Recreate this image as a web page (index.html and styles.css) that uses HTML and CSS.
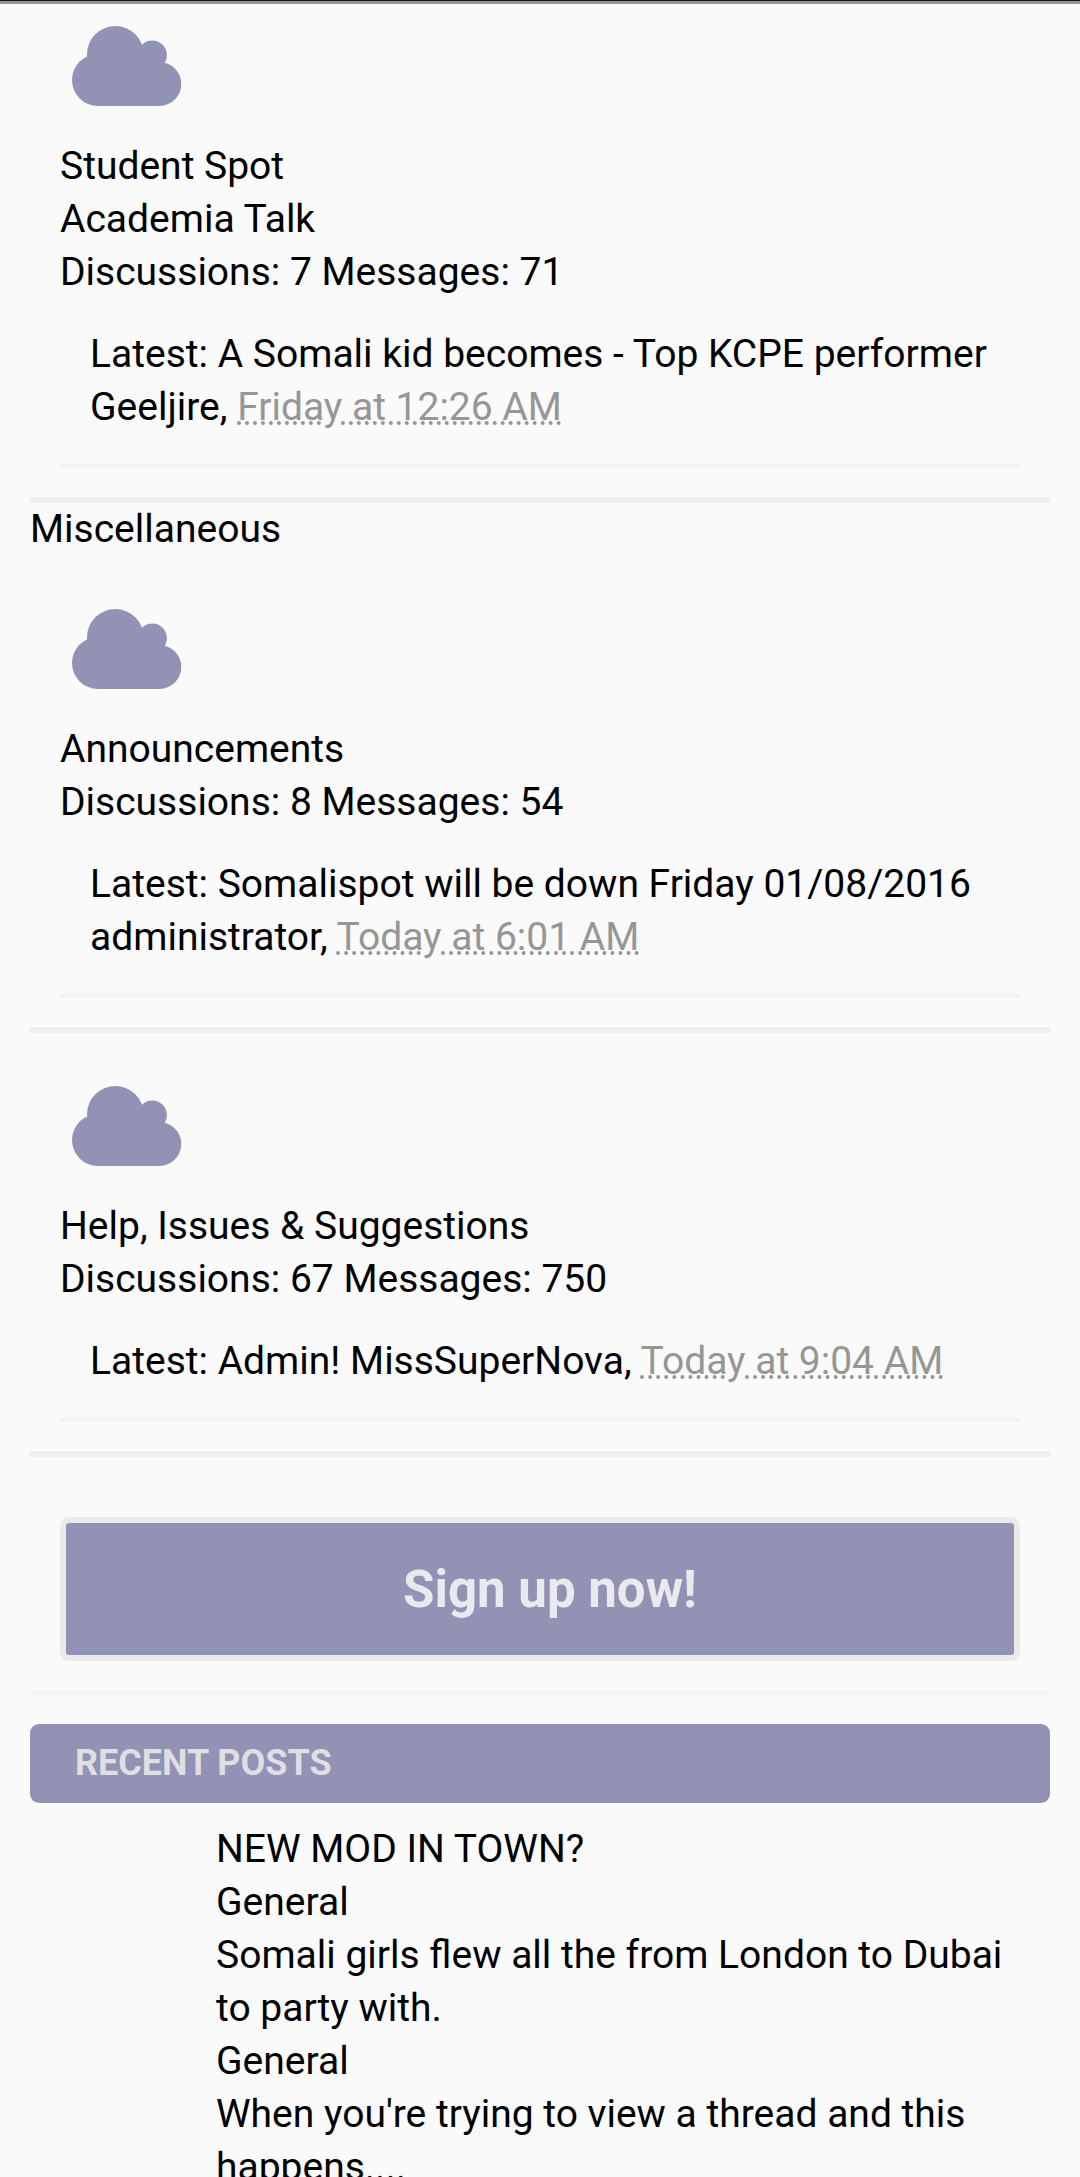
FILE: index.html
```html
<!DOCTYPE html>
<html lang="en">
  <head>
    <meta charset="UTF-8" />
    <meta name="viewport" content="width=device-width, initial-scale=1.0" />
    <title>Forum</title>
    <link rel="stylesheet" href="styles.css">
  </head>
  <body>
    <!-- Cloud shape shared by every forum node -->
    <svg class="sprite" aria-hidden="true">
      <symbol id="cloud" viewBox="0 0 110 80">
        <circle cx="43.3" cy="28.3" r="28.3" />
        <circle cx="80.3" cy="29" r="14.6" />
        <circle cx="26" cy="54" r="26" />
        <circle cx="87.3" cy="58" r="22" />
        <path d="M26 40L43 28H80L87 40V80H26Z" />
      </symbol>
    </svg>

    <header class="topbar"></header>

    <main class="content">
      <ol class="nodes">
        <li class="node node-first">
          <div class="node-info">
            <svg class="node-icon"><use href="#cloud" /></svg>
            <h3><a href="#">Student Spot</a></h3>
            <p>Academia Talk</p>
            <p>Discussions: 7 Messages: 71</p>
            <p class="latest">
              Latest: <a href="#">A Somali kid becomes - Top KCPE performer</a>
              <a href="#">Geeljire</a>, <abbr title="Friday at 12:26 AM">Friday at 12:26 AM</abbr>
            </p>
          </div>
        </li>
      </ol>

      <h2 class="category"><a href="#">Miscellaneous</a></h2>
      <ol class="nodes">
        <li class="node">
          <div class="node-info">
            <svg class="node-icon"><use href="#cloud" /></svg>
            <h3><a href="#">Announcements</a></h3>
            <p>Discussions: 8 Messages: 54</p>
            <p class="latest">
              Latest: <a href="#">Somalispot will be down Friday 01/08/2016</a>
              <a href="#">administrator</a>, <abbr title="Today at 6:01 AM">Today at 6:01 AM</abbr>
            </p>
          </div>
        </li>
        <li class="node">
          <div class="node-info">
            <svg class="node-icon"><use href="#cloud" /></svg>
            <h3><a href="#">Help, Issues &amp; Suggestions</a></h3>
            <p>Discussions: 67 Messages: 750</p>
            <p class="latest">
              Latest: <a href="#">Admin!</a>
              <a href="#">MissSuperNova</a>, <abbr title="Today at 9:04 AM">Today at 9:04 AM</abbr>
            </p>
          </div>
        </li>
      </ol>

      <div class="signup">
        <button type="button" class="signup-button">Sign up now!</button>
      </div>

      <section class="recent">
        <h2 class="recent-title">Recent Posts</h2>
        <ul class="recent-list">
          <li><a href="#">NEW MOD IN TOWN?</a><br><a href="#">General</a></li>
          <li><a href="#">Somali girls flew all the from London to Dubai to party with.</a><br><a href="#">General</a></li>
          <li><a href="#">When you're trying to view a thread and this happens....</a></li>
        </ul>
      </section>
    </main>
  </body>
</html>
```

FILE: styles.css
```css
body,
h2,
h3,
p,
ol,
ul {
  margin: 0;
  padding: 0;
}

body {
  background-color: #fafafa;
  color: #000;
  font-family: Roboto, sans-serif;
  font-size: 39px;
  line-height: 53px;
}

h2,
h3 {
  font-size: 39px;
  font-weight: normal;
}

ol,
ul {
  list-style: none;
}

a {
  color: inherit;
  text-decoration: none;
}

.sprite {
  display: none;
}

/* Bottom edge of the navigation */
.topbar {
  height: 3px;
  background-color: #999499;
  border-top: 1px solid #1a151a;
}

.content {
  padding: 0 30px;
}

/* Forum nodes */
.node {
  padding: 53px 30px 30px;
  border-bottom: 6px solid #eee;
}

.node-first {
  padding-top: 22px;
}

.node-info {
  border-bottom: 3px solid #f3f3f3;
}

.node-icon {
  display: block;
  width: 110px;
  height: 80px;
  margin: 0 0 34px 12px;
  fill: #9292b4;
}

.latest {
  padding: 29px 30px 30px;
}

abbr {
  color: #969696;
  text-decoration: underline dotted 4px;
  text-underline-offset: 1px;
}

/* Sign up box */
.signup {
  padding: 60px 30px 30px;
  border-bottom: 3px solid #f3f3f3;
}

/* The frame is the background showing through the padding */
.signup-button {
  display: block;
  width: 100%;
  height: 144px;
  padding: 6px;
  border: none;
  border-radius: 9px;
  background: linear-gradient(#9292b4, #9292b4) content-box, #eaeaea;
  color: #eaeaee;
  font-family: inherit;
  font-size: 51px;
  font-weight: bold;
  text-indent: 20px;
  cursor: pointer;
}

/* Recent posts */
.recent {
  padding-top: 30px;
}

.recent-title {
  padding: 13px 45px;
  border-radius: 9px;
  background-color: #9292b4;
  color: #dedee3;
  font-size: 36px;
  font-weight: bold;
  text-transform: uppercase;
}

.recent-list {
  padding: 20px 30px 0 186px;
}
```
